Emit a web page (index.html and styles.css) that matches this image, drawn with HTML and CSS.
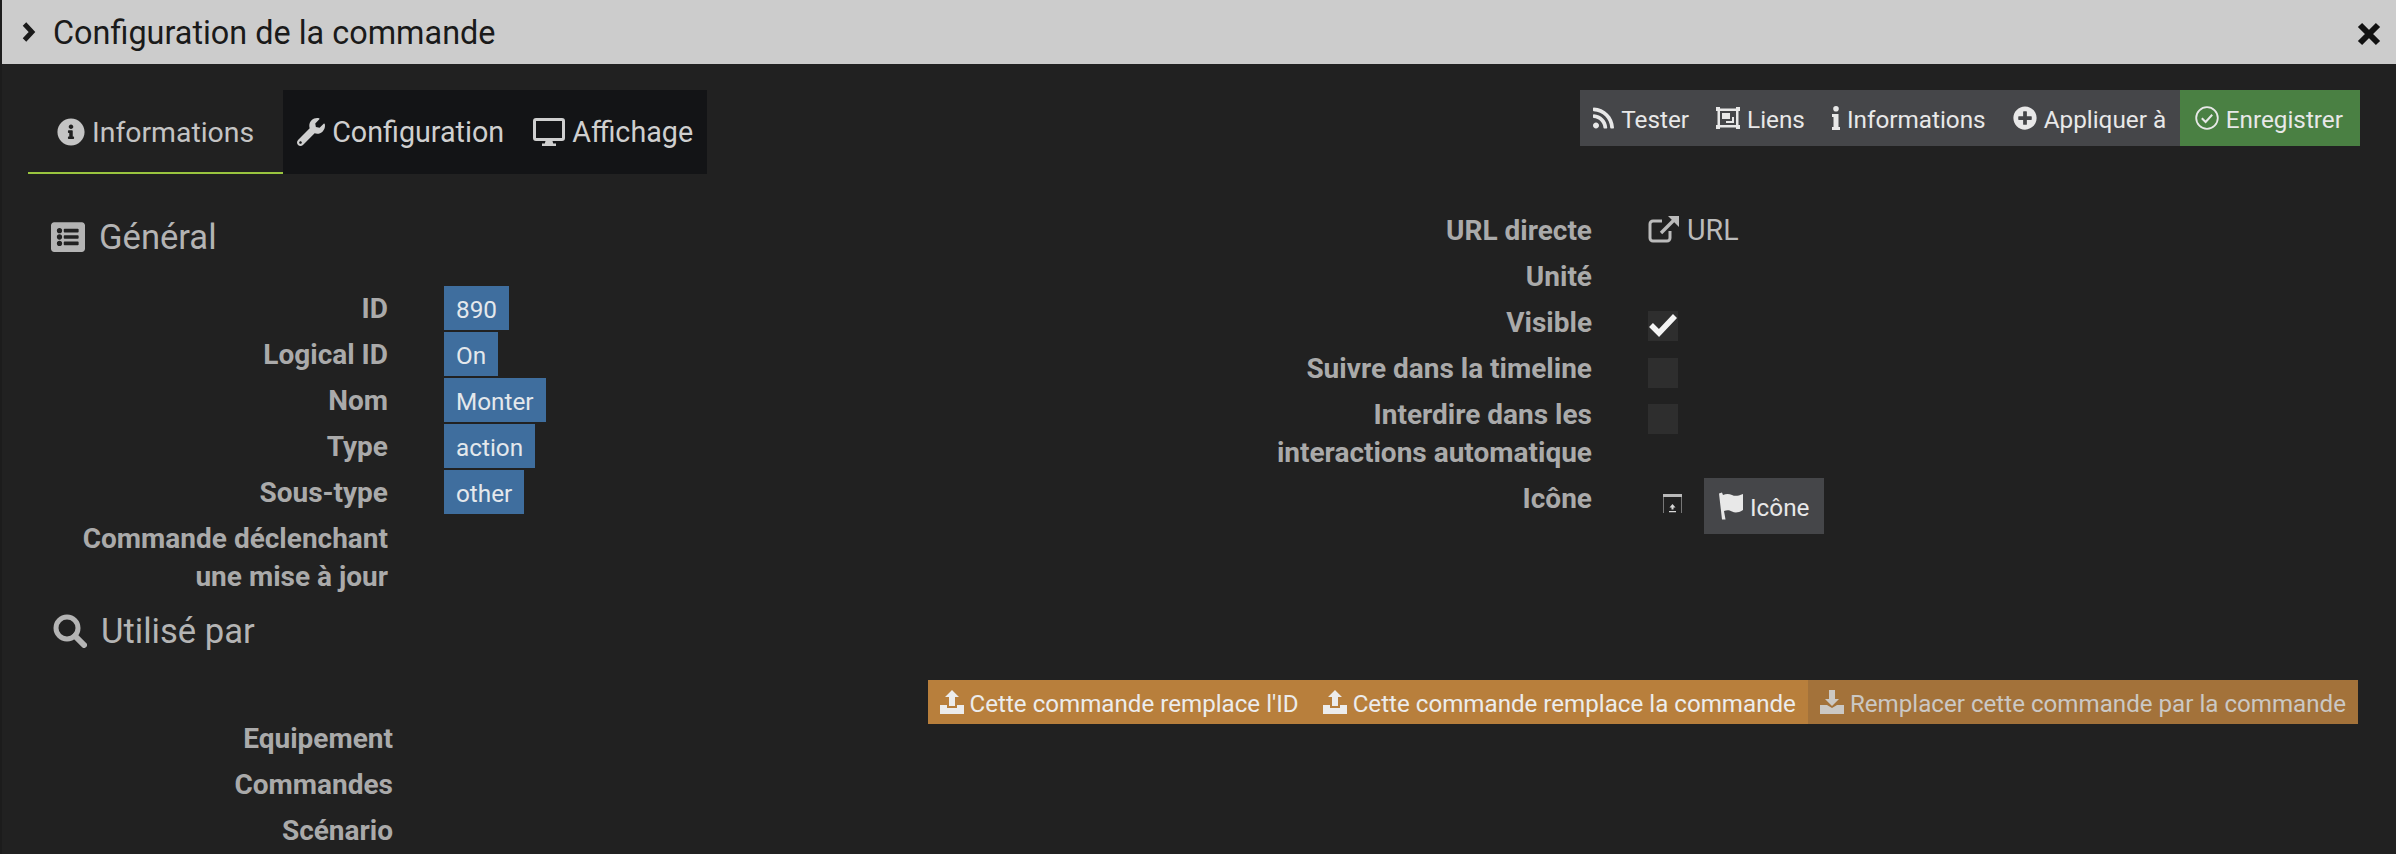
FILE: index.html
```html
<!DOCTYPE html>
<html lang="fr">
<head>
<meta charset="utf-8">
<title>Configuration de la commande</title>
<link rel="stylesheet" href="styles.css">
</head>
<body>
<div class="window">
  <header class="titlebar">
    <div class="title-left">
      <svg class="ic-chevron" viewBox="0 0 14 20"><path d="M2.5 2 10 10 2.5 18" fill="none" stroke="#1a1a1a" stroke-width="4.8"/></svg>
      <span class="title">Configuration de la commande</span>
    </div>
    <svg class="ic-close" viewBox="0 0 24 24"><path d="M3 3 21 21M21 3 3 21" fill="none" stroke="#111" stroke-width="6"/></svg>
  </header>

  <main class="content">
    <div class="topbar">
      <nav class="tabs">
        <a class="tab tab-active">
          <svg class="ic-tab" viewBox="0 0 512 512"><path fill="currentColor" d="M256 8C119.043 8 8 119.083 8 256c0 136.997 111.043 248 248 248s248-111.003 248-248C504 119.083 392.957 8 256 8zm0 110c23.196 0 42 18.804 42 42s-18.804 42-42 42-42-18.804-42-42 18.804-42 42-42zm56 254c0 6.627-5.373 12-12 12h-88c-6.627 0-12-5.373-12-12v-24c0-6.627 5.373-12 12-12h12v-64h-12c-6.627 0-12-5.373-12-12v-24c0-6.627 5.373-12 12-12h64c6.627 0 12 5.373 12 12v100h12c6.627 0 12 5.373 12 12v24z"/></svg>
          Informations
        </a>
        <div class="tabs-rest">
          <a class="tab">
            <svg class="ic-tab" viewBox="0 0 512 512"><path fill="currentColor" d="M507.73 109.1c-2.24-9.03-13.54-12.09-20.12-5.51l-74.36 74.36-67.88-11.31-11.31-67.88 74.36-74.36c6.62-6.62 3.43-17.9-5.66-20.16-47.38-11.74-99.55.91-136.58 37.93-39.64 39.64-50.55 97.1-34.05 147.2L18.74 402.76c-24.99 24.99-24.99 65.51 0 90.5 24.99 24.99 65.51 24.99 90.5 0l213.21-213.21c50.12 16.71 107.47 5.68 147.37-34.22 37.07-37.07 49.7-89.32 37.91-136.73zM64 472c-13.25 0-24-10.75-24-24 0-13.26 10.75-24 24-24s24 10.74 24 24c0 13.25-10.75 24-24 24z"/></svg>
            Configuration
          </a>
          <a class="tab">
            <svg class="ic-desktop" viewBox="0 0 32 28"><path fill="currentColor" fill-rule="evenodd" d="M3 0h26a3 3 0 0 1 3 3v17a3 3 0 0 1-3 3H19.500l.7 2.500H23V28H9v-2.500h2.800l.7-2.500H3a3 3 0 0 1-3-3V3a3 3 0 0 1 3-3zm0 3v17h26V3z"/></svg>
            Affichage
          </a>
        </div>
      </nav>
      <div class="actions">
        <a class="btn">
          <svg class="ic-btn" viewBox="0 0 448 512"><path fill="currentColor" d="M128.081 415.959c0 35.369-28.672 64.041-64.041 64.041S0 451.328 0 415.959s28.672-64.041 64.041-64.041 64.04 28.673 64.04 64.041zm175.66 47.25c-8.354-154.6-132.185-278.587-286.95-286.95C7.656 175.765 0 183.105 0 192.253v48.069c0 8.415 6.49 15.472 14.887 16.018 111.832 7.284 201.473 96.702 208.772 208.772.547 8.397 7.604 14.887 16.018 14.887h48.069c9.149.001 16.489-7.655 15.995-16.79zm144.249.288C439.596 229.677 251.465 40.445 16.503 32.01 7.473 31.686 0 38.981 0 48.016v48.068c0 8.625 6.835 15.645 15.453 15.999 191.179 7.839 344.627 161.316 352.465 352.465.353 8.618 7.373 15.453 15.999 15.453h48.068c9.034-.001 16.329-7.474 16.005-16.504z"/></svg>
          <span class="btn-text">Tester</span>
        </a>
        <a class="btn">
          <svg class="ic-links" viewBox="0 0 24 22"><path fill="currentColor" fill-rule="evenodd" d="M0 0h4v1.500h16V0h4v4h-1.500v14H24v4h-4v-1.500H4V22H0v-4h1.500V4H0zm4 4v14h16V4zm2 2h8v6H6zm10 2v2h2v6h-8v-2h6V8z"/></svg>
          <span class="btn-text">Liens</span>
        </a>
        <a class="btn">
          <svg class="ic-i" viewBox="0 0 8 24"><path fill="currentColor" d="M4 0a2.800 2.800 0 1 1 0 5.600A2.800 2.800 0 0 1 4 0zM0 8h6.500v13H8v3H0v-3h1.500V11H0z"/></svg>
          <span class="btn-text">Informations</span>
        </a>
        <a class="btn">
          <svg class="ic-btn-round" viewBox="0 0 512 512"><path fill="currentColor" d="M256 8C119 8 8 119 8 256s111 248 248 248 248-111 248-248S393 8 256 8zm144 276c0 6.600-5.400 12-12 12h-92v92c0 6.600-5.400 12-12 12h-56c-6.600 0-12-5.400-12-12v-92h-92c-6.600 0-12-5.400-12-12v-56c0-6.600 5.400-12 12-12h92v-92c0-6.600 5.400-12 12-12h56c6.600 0 12 5.400 12 12v92h92c6.600 0 12 5.400 12 12v56z"/></svg>
          <span class="btn-text">Appliquer à</span>
        </a>
        <a class="btn btn-save">
          <svg class="ic-btn-round" viewBox="0 0 24 24"><circle cx="12" cy="12" r="10.800" fill="none" stroke="currentColor" stroke-width="1.800"/><path d="M6.800 12.300 10.600 16 17.200 8.800" fill="none" stroke="currentColor" stroke-width="2"/></svg>
          <span class="btn-text">Enregistrer</span>
        </a>
      </div>
    </div>

    <div class="columns">
      <section class="col">
        <h3 class="heading">
          <svg class="ic-head" viewBox="0 0 512 512"><path fill="currentColor" d="M464 480H48c-26.510 0-48-21.490-48-48V80c0-26.510 21.490-48 48-48h416c26.510 0 48 21.490 48 48v352c0 26.510-21.490 48-48 48zM128 120c-22.091 0-40 17.909-40 40s17.909 40 40 40 40-17.909 40-40-17.909-40-40-40zm0 96c-22.091 0-40 17.909-40 40s17.909 40 40 40 40-17.909 40-40-17.909-40-40-40zm0 96c-22.091 0-40 17.909-40 40s17.909 40 40 40 40-17.909 40-40-17.909-40-40-40zm288-136v-32c0-6.627-5.373-12-12-12H204c-6.627 0-12 5.373-12 12v32c0 6.627 5.373 12 12 12h200c6.627 0 12-5.373 12-12zm0 96v-32c0-6.627-5.373-12-12-12H204c-6.627 0-12 5.373-12 12v32c0 6.627 5.373 12 12 12h200c6.627 0 12-5.373 12-12zm0 96v-32c0-6.627-5.373-12-12-12H204c-6.627 0-12 5.373-12 12v32c0 6.627 5.373 12 12 12h200c6.627 0 12-5.373 12-12z"/></svg>
          Général
        </h3>
        <div class="row"><div class="label">ID</div><div class="value"><span class="badge">890</span></div></div>
        <div class="row"><div class="label">Logical ID</div><div class="value"><span class="badge">On</span></div></div>
        <div class="row"><div class="label">Nom</div><div class="value"><span class="badge">Monter</span></div></div>
        <div class="row"><div class="label">Type</div><div class="value"><span class="badge">action</span></div></div>
        <div class="row"><div class="label">Sous-type</div><div class="value"><span class="badge">other</span></div></div>
        <div class="row"><div class="label">Commande déclenchant<br>une mise à jour</div><div class="value"></div></div>
        <h3 class="heading heading-second">
          <svg class="ic-head" viewBox="0 0 34 34"><circle cx="14" cy="14" r="11" fill="none" stroke="currentColor" stroke-width="5"/><path d="M22 22 31 31" fill="none" stroke="currentColor" stroke-width="6" stroke-linecap="round"/></svg>
          Utilisé par
        </h3>
      </section>

      <section class="col">
        <div class="row"><div class="label">URL directe</div><div class="value value-link">
          <svg class="ic-ext" viewBox="0 0 32 28"><path d="M22 16v7a3 3 0 0 1-3 3H5a3 3 0 0 1-3-3V9a3 3 0 0 1 3-3h9" fill="none" stroke="currentColor" stroke-width="3"/><path d="M13 18 28 3" fill="none" stroke="currentColor" stroke-width="3.400"/><path d="M20 1h11v11z" fill="currentColor"/></svg>
          URL
        </div></div>
        <div class="row"><div class="label">Unité</div><div class="value"></div></div>
        <div class="row"><div class="label">Visible</div><div class="value"><span class="checkbox">
          <svg class="ic-check" viewBox="0 0 30 26"><path d="M3 14 11 22 27 5" fill="none" stroke="#f4f4f4" stroke-width="5.500"/></svg>
        </span></div></div>
        <div class="row"><div class="label">Suivre dans la timeline</div><div class="value"><span class="checkbox"></span></div></div>
        <div class="row"><div class="label">Interdire dans les<br>interactions automatique</div><div class="value"><span class="checkbox"></span></div></div>
        <div class="row"><div class="label">Icône</div><div class="value value-icon">
          <svg class="ic-blind" viewBox="0 0 19 19"><path d="M0 0h19v3H0z" fill="#b9b9b9"/><path d="M.5 3v16M18.500 3v16" stroke="#777" fill="none"/><path d="M9.500 10l3 3.500h-2v2h-2v-2h-2zM6 17h7v1.200H6z" fill="#d8d8d8"/></svg>
          <a class="btn btn-icon">
            <svg class="ic-flag" viewBox="0 0 24 28"><path fill="currentColor" d="M0 1.500 3 .5l1 2.500c3-1.500 6-1.500 9 0s6 1 11-1v16c-5 3-8 3-11 1.500s-5-1.500-8-.5l1.500 8.500H3z"/></svg>
            <span class="btn-text">Icône</span>
          </a>
        </div></div>
      </section>
    </div>

    <div class="used">
      <div class="used-rows">
        <div class="row"><div class="label">Equipement</div></div>
        <div class="row"><div class="label">Commandes</div></div>
        <div class="row"><div class="label">Scénario</div></div>
      </div>
      <div class="replace">
        <a class="rbtn">
          <svg class="ic-tray" viewBox="0 0 24 24"><path fill="currentColor" d="M12 0l7 7h-4v9H9V7H5zM0 15h7v3h10v-3h7v9H0zm17 6h1.500v1.500H17zm3 0h1.500v1.500H20z"/></svg>
          <span class="btn-text">Cette commande remplace l'ID</span>
        </a>
        <a class="rbtn">
          <svg class="ic-tray" viewBox="0 0 24 24"><path fill="currentColor" d="M12 0l7 7h-4v9H9V7H5zM0 15h7v3h10v-3h7v9H0zm17 6h1.500v1.500H17zm3 0h1.500v1.500H20z"/></svg>
          <span class="btn-text">Cette commande remplace la commande</span>
        </a>
        <a class="rbtn rbtn-dim">
          <svg class="ic-tray" viewBox="0 0 24 24"><path fill="currentColor" d="M9 0h6v9h4l-7 7-7-7h4zM0 15h7l5 3 5-3h7v9H0zm17 6h1.500v1.500H17zm3 0h1.500v1.500H20z"/></svg>
          <span class="btn-text">Remplacer cette commande par la commande</span>
        </a>
      </div>
    </div>
  </main>
</div>
</body>
</html>
```

FILE: styles.css
```css
* { box-sizing: border-box; }
html, body { margin: 0; padding: 0; height: 100%; background: #212121; overflow: hidden; }
body { font-family: Roboto, "Liberation Sans", sans-serif; font-size: 24.3px; color: #aaaaaa; }
svg { display: block; flex: none; }
a { display: flex; align-items: center; }

.window { height: 854px; overflow: hidden; border-left: 2px solid #1c1c1c; background: #212121; }

.titlebar { height: 64px; background: #cccccc; color: #1a1a1a; box-shadow: -2px 0 0 #808080; display: flex; align-items: center; justify-content: space-between; padding: 0 15px 0 20px; }
.title-left { display: flex; align-items: center; gap: 17px; }
.title { font-size: 32.4px; position: relative; top: 1px; }
.ic-chevron { width: 14px; height: 20px; }
.ic-close { width: 24px; height: 24px; margin-top: 4px; }

.content { padding: 26px 36px 0 26px; }
.topbar { display: flex; justify-content: space-between; align-items: flex-start; height: 84px; }
.tabs { display: flex; height: 84px; font-size: 28.4px; }
.tabs-rest { display: flex; background: #131416; padding: 0 14px; gap: 29px; font-size: 28.7px; }
.tab { gap: 7px; color: #cfcfcf; }
.tab-active { padding: 2px 29px 0 29px; color: #c4c4c4; border-bottom: 2px solid #9ac53f; }
.ic-tab { width: 28px; height: 28px; }
.ic-desktop { width: 32px; height: 28px; }

.actions { display: flex; height: 56px; background: #454649; color: #e8e8e8; }
.btn { gap: 7px; padding: 0 13.5px; height: 56px; }
.btn-text { position: relative; top: 1px; }
.btn-save { background: #4a8043; padding: 0 17px 0 15px; }
.ic-btn { width: 21px; height: 24px; }
.ic-links { width: 24px; height: 22px; }
.ic-i { width: 8px; height: 24px; }
.ic-btn-round { width: 24px; height: 24px; }

.columns { display: grid; grid-template-columns: 1204px 1fr; padding-top: 34px; }
.heading { margin: 0 0 20px; height: 58px; display: flex; align-items: center; gap: 14px; font-size: 34.6px; font-weight: 400; color: #b4b4b4; padding-left: 23px; }
.heading-second { margin: 2px 0 0; padding-left: 25px; }
.ic-head { width: 34px; height: 34px; }

.row { display: grid; grid-template-columns: 360px 1fr; column-gap: 56px; min-height: 46px; }
.label { text-align: right; font-weight: 700; font-size: 28px; line-height: 38px; padding: 4px 0; color: #aaaaaa; }
.badge { display: inline-block; height: 44px; line-height: 47px; padding: 0 12px; background: #3f6e9e; color: #e4e8ec; vertical-align: top; }
.value { min-height: 44px; }
.value-link { display: flex; align-items: flex-start; gap: 7px; font-size: 28.6px; line-height: 44px; color: #bbbbbb; padding-top: 0; }
.ic-ext { width: 32px; height: 28px; margin-top: 7px; }
.checkbox { display: block; width: 30px; height: 30px; margin-top: 12px; background: #2e2e2e; }
.ic-check { width: 30px; height: 26px; margin-top: -1px; }
.value-icon { display: flex; align-items: flex-start; padding: 2px 0 0 15px; gap: 22px; }
.ic-blind { width: 19px; height: 19px; margin-top: 16px; }
.btn-icon { background: #454649; color: #e8e8e8; padding: 0 14.5px 0 15px; }
.ic-flag { width: 24px; height: 28px; }

.used { display: flex; justify-content: space-between; align-items: flex-start; }
.used-rows { padding-top: 56px; width: 370px; }
.used-rows .row { grid-template-columns: 365px; }
.replace { display: flex; margin-top: 20px; height: 44px; font-size: 24.15px; background: #b87f3c; color: #ececec; margin-right: 2px; }
.rbtn { gap: 6px; padding: 0 12px; height: 44px; }
.rbtn .btn-text { top: 2px; }
.rbtn-dim { background: #a3723a; color: #cbc8c4; }
.ic-tray { width: 24px; height: 24px; }
```
